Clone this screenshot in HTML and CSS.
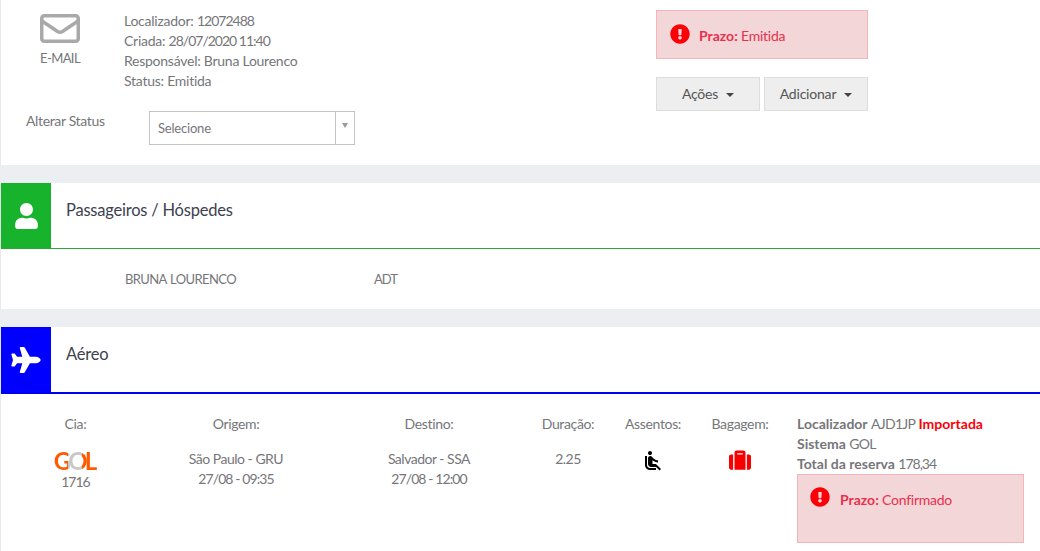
FILE: index.html
```html
<!DOCTYPE html>
<html lang="pt-BR">
<head>
<meta charset="utf-8">
<title>Reserva</title>
<link rel="stylesheet" href="styles.css">
</head>
<body>
<section class="panel top">
  <div class="top-left">
    <div class="summary">
      <div class="email">
        <svg class="email-icon" viewBox="0 0 40 30"><rect x="1.750" y="1.750" width="36.500" height="25.500" rx="2.500"/><path d="M2 7l15.500 10.500q2.500 1.500 5 0L38 7"/></svg>
        <span>E-MAIL</span>
      </div>
      <div class="facts">
        <div>Localizador: <span class="n">12072488</span></div>
        <div>Criada: <span class="n">28/07/2020 11:40</span></div>
        <div>Responsável: Bruna Lourenco</div>
        <div>Status: Emitida</div>
      </div>
    </div>
    <div class="status-row">
      <span class="status-label">Alterar Status</span>
      <div class="select"><span class="select-value">Selecione</span><span class="select-arrow"></span></div>
    </div>
  </div>
  <div class="top-right">
    <div class="alert alert-top">
      <svg class="alert-icon" viewBox="0 0 512 512"><path d="M504 256c0 136.997-111.043 248-248 248S8 392.997 8 256C8 119.083 119.043 8 256 8s248 111.083 248 248zm-248 50c-25.405 0-46 20.595-46 46s20.595 46 46 46 46-20.595 46-46-20.595-46-46-46zm-43.673-165.346l7.418 136c.347 6.364 5.609 11.346 11.982 11.346h48.546c6.373 0 11.635-4.982 11.982-11.346l7.418-136c.375-6.874-5.098-12.654-11.982-12.654h-63.383c-6.884 0-12.356 5.780-11.981 12.654z"/></svg>
      <span><b>Prazo:</b> Emitida</span>
    </div>
    <div class="buttons">
      <button class="btn">Ações<i class="caret"></i></button>
      <button class="btn">Adicionar<i class="caret"></i></button>
    </div>
  </div>
</section>

<section class="panel passengers">
  <header class="section-head head-green">
    <span class="section-icon"><svg class="icon-user" viewBox="0 0 448 512"><path d="M224 256c70.700 0 128-57.300 128-128S294.700 0 224 0 96 57.300 96 128s57.300 128 128 128zm89.600 32h-16.700c-22.200 10.200-46.900 16-72.900 16s-50.600-5.800-72.900-16h-16.700C60.200 288 0 348.200 0 422.400V464c0 26.500 21.500 48 48 48h352c26.500 0 48-21.500 48-48v-41.600c0-74.200-60.200-134.400-134.400-134.400z"/></svg></span>
    <h2>Passageiros / Hóspedes</h2>
  </header>
  <div class="passenger-row">
    <span class="pax-name">BRUNA LOURENCO</span>
    <span class="pax-type">ADT</span>
  </div>
</section>

<section class="panel flights">
  <header class="section-head head-blue">
    <span class="section-icon"><svg class="icon-plane" viewBox="0 0 576 512"><path d="M480 192H365.710L260.610 8.060A16.014 16.014 0 0 0 246.710 0h-65.500c-10.630 0-18.300 10.170-15.380 20.390L214.860 192H112l-43.200-57.600c-3.020-4.030-7.770-6.400-12.800-6.400H16.010C5.600 128-2.040 137.780.490 147.880L32 256 .490 364.120C-2.040 374.220 5.600 384 16.010 384H56c5.040 0 9.780-2.370 12.800-6.400L112 320h102.860l-49.030 171.600c-2.920 10.220 4.750 20.400 15.380 20.400h65.500c5.740 0 11.040-3.080 13.890-8.060L365.710 320H480c35.350 0 96-28.650 96-64s-60.650-64-96-64z"/></svg></span>
    <h2>Aéreo</h2>
  </header>
  <div class="flight-row">
    <div class="col">
      <div class="col-title">Cia:</div>
      <div class="gol"><span class="gol-word">GOL</span></div>
      <div class="n">1716</div>
    </div>
    <div class="col">
      <div class="col-title">Origem:</div>
      <div class="col-body">São Paulo - GRU<br><span class="n">27/08 - 09:35</span></div>
    </div>
    <div class="col">
      <div class="col-title">Destino:</div>
      <div class="col-body">Salvador - SSA<br><span class="n">27/08 - 12:00</span></div>
    </div>
    <div class="col">
      <div class="col-title">Duração:</div>
      <div class="col-body n">2.25</div>
    </div>
    <div class="col">
      <div class="col-title">Assentos:</div>
      <svg class="icon-seat" viewBox="0 0 24 24"><path d="M7.590 5.410c-.78-.78-.78-2.050 0-2.830.78-.78 2.050-.78 2.830 0 .78.78.78 2.050 0 2.830-.79.79-2.050.79-2.830 0zM6 16V7H4v9c0 2.760 2.240 5 5 5h6v-2H9c-1.660 0-3-1.340-3-3zm14 4.070L14.930 15H11.500v-3.680c1.400 1.150 3.600 2.160 5.500 2.160v-2.160c-1.660.02-3.610-.87-4.670-2.040l-1.400-1.550c-.19-.21-.43-.38-.69-.5-.29-.14-.62-.23-.96-.23h-.03C8.010 7 7 8.010 7 9.250V15c0 1.660 1.340 3 3 3h5.070l3.500 3.500L20 20.070z"/></svg>
    </div>
    <div class="col">
      <div class="col-title">Bagagem:</div>
      <svg class="icon-bag" viewBox="0 0 512 512"><path d="M128 480h256V80c0-26.500-21.500-48-48-48H176c-26.500 0-48 21.500-48 48v400zm64-384h128v32H192V96zm320 80v256c0 26.500-21.500 48-48 48h-48V128h48c26.500 0 48 21.500 48 48zM96 480H48c-26.500 0-48-21.500-48-48V176c0-26.500 21.500-48 48-48h48v352z"/></svg>
    </div>
    <div class="booking">
      <div><b>Localizador</b> <span class="code">AJD1JP</span> <b class="imported">Importada</b></div>
      <div><b>Sistema</b> <span class="code">GOL</span></div>
      <div><b>Total da reserva</b> <span class="n">178,34</span></div>
      <div class="alert alert-flight">
        <svg class="alert-icon" viewBox="0 0 512 512"><path d="M504 256c0 136.997-111.043 248-248 248S8 392.997 8 256C8 119.083 119.043 8 256 8s248 111.083 248 248zm-248 50c-25.405 0-46 20.595-46 46s20.595 46 46 46 46-20.595 46-46-20.595-46-46-46zm-43.673-165.346l7.418 136c.347 6.364 5.609 11.346 11.982 11.346h48.546c6.373 0 11.635-4.982 11.982-11.346l7.418-136c.375-6.874-5.098-12.654-11.982-12.654h-63.383c-6.884 0-12.356 5.780-11.981 12.654z"/></svg>
        <span><b>Prazo:</b> Confirmado</span>
      </div>
    </div>
  </div>
</section>
</body>
</html>
```
FILE: styles.css
```css
* { box-sizing: border-box; }
html, body { height: 100%; }
body {
  margin: 0;
  background: #ebeff2;
  color: #76767a;
  font: 14px/20px "Lato", "Liberation Sans", sans-serif;
  letter-spacing: -0.25px;
  overflow: hidden;
  display: flex;
  flex-direction: column;
  gap: 18px;
}
b { font-weight: 700; letter-spacing: 0; }
.n { letter-spacing: -1px; }
.code { letter-spacing: -0.7px; }

.panel { background: #fff; border-left: 1px solid #e6e9ec; }

.top { height: 165px; display: flex; }
.top-left { width: 655px; }
.top-right { width: 212px; padding-top: 10px; }

.summary { display: flex; padding-top: 11px; height: 111px; }
.email {
  width: 123px;
  padding: 3px 0 0 39px;
  display: flex;
  flex-direction: column;
  align-items: flex-start;
  gap: 5px;
  font-size: 13px;
  line-height: 18px;
}
.email span { width: 40px; white-space: nowrap; display: flex; justify-content: center; letter-spacing: -0.6px; }
.email-icon { width: 40px; height: 30px; flex: none; fill: none; stroke: #a9a9a9; stroke-width: 3.500; }

.status-row { display: flex; padding-left: 25px; }
.status-label { width: 123px; letter-spacing: -0.35px; }
.select {
  width: 206px;
  height: 34px;
  border: 1px solid #c4c4c4;
  display: flex;
  align-items: center;
  justify-content: space-between;
  padding-left: 8px;
  font-size: 13px;
  letter-spacing: -0.2px;
}
.select-arrow {
  width: 19px;
  height: 32px;
  border-left: 1px solid #c4c4c4;
  position: relative;
}
.select-arrow::after {
  content: "";
  position: absolute;
  left: 6px;
  top: 11px;
  border: 3px solid transparent;
  border-top: 5px solid #9a9a9a;
  border-bottom: 0;
}

.alert {
  background: #f3d6d7;
  border: 1px solid #f4b4b8;
  color: #e8304f;
  display: flex;
  align-items: flex-start;
  gap: 9px;
}
.alert-icon { width: 20px; height: 20px; fill: #fb0007; flex: none; }
.alert-top { height: 49px; padding: 13px 0 0 13px; }
.alert-top span { margin-top: 2px; }
.alert-flight { width: 227px; height: 69px; padding: 12px 0 0 12px; gap: 10px; }
.alert-flight span { margin-top: 3px; }

.buttons { display: flex; gap: 4px; margin-top: 18px; }
.btn {
  width: 104px;
  height: 34px;
  background: #eee;
  border: 1px solid #ddd;
  color: #555;
  font: inherit;
  letter-spacing: -0.2px;
  padding: 0;
}
.caret {
  display: inline-block;
  margin-left: 8px;
  vertical-align: 2px;
  border: 4px solid transparent;
  border-top: 4px solid #444;
  border-bottom: 0;
}

.section-head { height: 66px; display: flex; background: #fff; }
.head-green { border-bottom: 1px solid #30a63a; }
.head-blue { height: 67px; border-bottom: 2px solid #0000f0; }
.section-icon {
  width: 50px;
  display: flex;
  align-items: center;
  justify-content: center;
}
.head-green .section-icon { background: #18b32c; }
.head-blue .section-icon { background: #0000ff; }
.section-icon svg { fill: #fff; }
.icon-user { width: 23px; height: 26px; margin-top: 1px; }
.icon-plane { width: 30px; height: 26px; margin-top: 1px; }
h2 {
  margin: 0;
  padding: 15px 0 0 15px;
  font-size: 16.500px;
  line-height: 24px;
  font-weight: 400;
  letter-spacing: -0.22px;
  color: #3d4250;
}

.passengers { height: 126px; }
.passenger-row { display: flex; padding: 20px 0 0 124px; font-size: 13px; }
.pax-name { width: 249px; letter-spacing: -0.6px; word-spacing: 1px; }
.pax-type { letter-spacing: -1px; }

.flights { flex: 1; }
.flight-row {
  display: grid;
  grid-template-columns: 149px 172px 214px 64px 106px 68px 1fr;
  padding-top: 20px;
}
.col { text-align: center; }
.col-title { height: 35px; letter-spacing: -0.35px; }
.col-body { letter-spacing: -0.5px; }
.col-body .n { letter-spacing: -0.9px; }
.gol {
  display: flex;
  justify-content: center;
  height: 23px;
  font: 700 24px/23px "Lato", sans-serif;
  letter-spacing: -3px;
}
.gol-word {
  padding-right: 3px;
  color: transparent;
  background: linear-gradient(90deg, #ff5a00 0 14px, #c8c8c8 14px 28px, #ff5a00 28px);
  -webkit-background-clip: text;
  background-clip: text;
}
.icon-seat { width: 24px; height: 24px; fill: #000; }
.icon-bag { width: 22px; height: 22px; fill: #f80000; }
.booking { padding-left: 23px; white-space: nowrap; }
.imported { color: #fb0007; }
```
